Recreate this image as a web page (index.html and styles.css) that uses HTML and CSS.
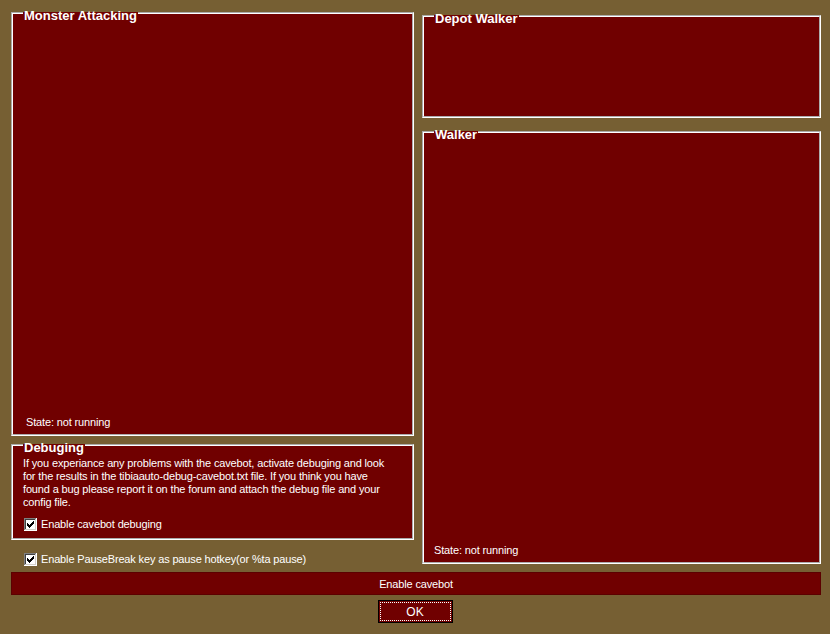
FILE: index.html
```html
<!DOCTYPE html>
<html>
<head>
<meta charset="utf-8">
<link rel="stylesheet" href="styles.css">
</head>
<body>
<div class="app">
  <div class="columns">
    <div class="col col-left">
      <fieldset class="group monster">
        <legend>Monster Attacking</legend>
        <div class="state state-monster">State: not running</div>
      </fieldset>
      <fieldset class="group debug">
        <legend>Debuging</legend>
        <p class="info">If you experiance any problems with the cavebot, activate debuging and look<br>for the results in the tibiaauto-debug-cavebot.txt file. If you think you have<br>found a bug please report it on the forum and attach the debug file and your<br>config file.</p>
        <div class="check check-debug">
          <svg class="box" width="13" height="13" viewBox="0 0 13 13" shape-rendering="crispEdges">
            <rect width="13" height="13" fill="#fff"/>
            <path d="M0 0.5H12M0.5 0V12" stroke="#808080"/>
            <path d="M1 1.5H11M1.5 1V11" stroke="#404040"/>
            <path d="M12.5 0V13M0 12.5H13" stroke="#fff"/>
            <path d="M11.5 1V12M1 11.5H12" stroke="#d4d0c8"/>
            <path d="M3 5h1v3h-1zM4 6h1v3h-1zM5 7h1v3h-1zM6 6h1v3h-1zM7 5h1v3h-1zM8 4h1v3h-1zM9 3h1v3h-1z" fill="#000"/>
          </svg>
          <span>Enable cavebot debuging</span>
        </div>
      </fieldset>
      <div class="check check-pause">
        <svg class="box" width="13" height="13" viewBox="0 0 13 13" shape-rendering="crispEdges">
          <rect width="13" height="13" fill="#fff"/>
          <path d="M0 0.5H12M0.5 0V12" stroke="#808080"/>
          <path d="M1 1.5H11M1.5 1V11" stroke="#404040"/>
          <path d="M12.5 0V13M0 12.5H13" stroke="#fff"/>
          <path d="M11.5 1V12M1 11.5H12" stroke="#d4d0c8"/>
          <path d="M3 5h1v3h-1zM4 6h1v3h-1zM5 7h1v3h-1zM6 6h1v3h-1zM7 5h1v3h-1zM8 4h1v3h-1zM9 3h1v3h-1z" fill="#000"/>
        </svg>
        <span>Enable PauseBreak key as pause hotkey(or %ta pause)</span>
      </div>
    </div>
    <div class="col col-right">
      <fieldset class="group depot">
        <legend>Depot Walker</legend>
      </fieldset>
      <fieldset class="group walker">
        <legend>Walker</legend>
        <div class="state state-walker">State: not running</div>
      </fieldset>
    </div>
  </div>
  <div class="bar">Enable cavebot</div>
</div>
<div class="okrow"><button class="ok">OK</button></div>
</body>
</html>
```

FILE: styles.css
```css
html, body {
  margin: 0;
  padding: 0;
}
body {
  width: 830px;
  height: 634px;
  background: #765f33;
  font-family: "Liberation Sans", Arial, sans-serif;
  font-size: 11px;
  letter-spacing: -0.15px;
  color: #fff;
  overflow: hidden;
}
.app {
  padding: 0 9px 0 11px;
}
.columns {
  display: flex;
  gap: 8px;
  height: 566px;
}
.col {
  display: flex;
  flex-direction: column;
}
.col-left {
  width: 403px;
  padding-top: 4px;
}
.col-right {
  width: 399px;
  padding-top: 7px;
}
.group {
  box-sizing: border-box;
  margin: 0;
  padding: 0 10px 5px 10px;
  border: 2px groove #fff;
  background: #700000;
  min-width: 0;
}
.group legend {
  font-size: 13px;
  font-weight: bold;
  line-height: 13px;
  letter-spacing: 0;
  padding: 5px 1px 0 1px;
  color: #fff;
}
.monster {
  height: 432px;
}
.debug {
  height: 104px;
}
.depot {
  height: 111px;
}
.walker {
  height: 441px;
  margin-top: 5px;
}
.state {
  line-height: 13px;
}
.state-monster {
  margin-top: 394px;
  margin-left: 3px;
}
.state-walker {
  margin-top: 403px;
}
.info {
  margin: 3px 0 0 0;
  line-height: 13px;
  white-space: nowrap;
}
.check {
  display: flex;
  align-items: center;
  gap: 4px;
  height: 13px;
  line-height: 13px;
}
.check .box {
  flex: none;
  display: block;
}
.check-debug {
  margin-top: 9px;
  margin-left: 1px;
}
.check-pause {
  margin-top: 13px;
  margin-left: 13px;
}
.bar {
  box-sizing: border-box;
  margin-top: 6px;
  height: 23px;
  background: #700000;
  border: 1px solid #5c0000;
  display: flex;
  align-items: center;
  justify-content: center;
}
.okrow {
  display: flex;
  justify-content: center;
  margin-top: 5px;
}
.ok {
  box-sizing: border-box;
  width: 75px;
  height: 23px;
  background: #700000;
  border: 1px solid #000;
  color: #fff;
  font-family: "Liberation Sans", Arial, sans-serif;
  font-size: 12px;
  padding: 0;
  outline: 1px dotted #fff;
  outline-offset: -3px;
}
```
